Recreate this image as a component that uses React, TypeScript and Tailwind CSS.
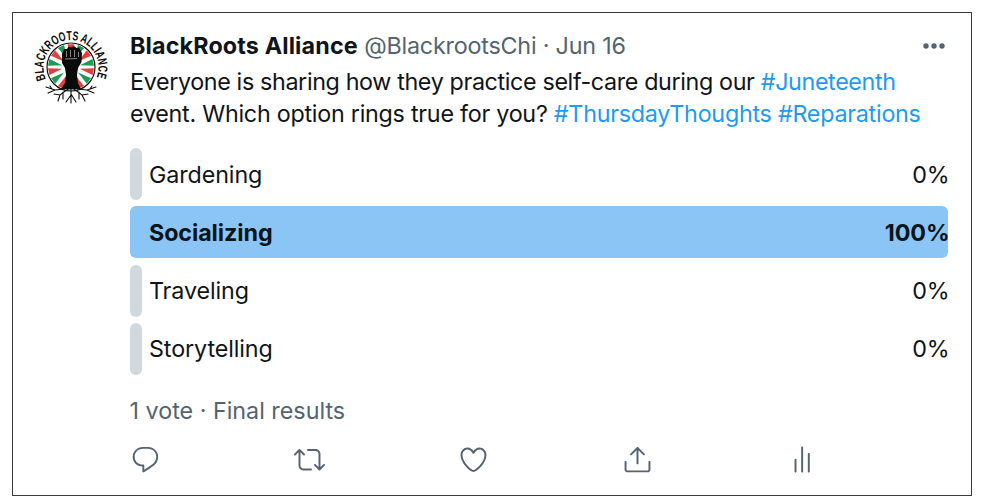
const ACTION = "#536471";

const Logo = () => {
	const cx = 38;
	const cy = 38;
	const rays = [-78, -52, -26, 0, 26, 52, 78, 102, 128, 154, 180, 206, 232, 258];
	return (
		<svg width="76" height="76" viewBox="0 0 76 76" className="overflow-visible">
			<defs>
				<path id="logoArc" d="M13 50 A27.5 27.5 0 1 1 63 50" />
			</defs>
			<circle cx={cx} cy={cy} r="24" fill="#fff" stroke="#111" strokeWidth="1.2" />
			{rays.map((a, i) => {
				const r0 = 9;
				const r1 = 23;
				const rad = ((a - 90) * Math.PI) / 180;
				const w = 0.15;
				const p = (r: number, t: number) =>
					`${cx + r * Math.cos(t)} ${cy + r * Math.sin(t)}`;
				return (
					<path
						key={i}
						d={`M${p(r0, rad)} L${p(r1, rad - w)} L${p(r1, rad + w)} Z`}
						fill={i % 2 === 0 ? "#1f9a55" : "#e2403f"}
					/>
				);
			})}
			{/* fist and forearm */}
			<path
				d="M29 25 L31 20 L34 20 L35.5 17.5 L38 18.5 L41 17 L43.5 19 L46 18.5 L49 24 L48.5 33 L45 39 L44 46 L45 54 L48 60 L28 60 L32 54 L33 46 L32 39 L29 34 Z"
				fill="#0b0b0b"
			/>
			<path d="M33.5 22 L33.5 28 M37.5 21 L37.5 28 M41.5 21 L41.5 28 M45.5 23 L45.5 28 M32 30 L44 29.5" stroke="#fff" strokeWidth="0.5" fill="none" />
			{/* roots */}
			<path
				d="M38 58 L38 74 M35 60 L27 66 L21 65 M27 66 L25 72 M32 60 L22 61 L13 58 M22 61 L15 64 M41 60 L49 66 L55 65 M49 66 L52 72 M44 60 L54 61 L63 58 M54 61 L61 64 M38 66 L33 73 M38 65 L43 73 M30 63 L30 70 M46 63 L46 70 M19 60 L17 57 M57 60 L59 57"
				stroke="#0b0b0b"
				strokeWidth="1.1"
				fill="none"
				strokeLinecap="round"
			/>
			<text
				fill="#0b0b0b"
				className="font-bold"
				style={{ fontFamily: '"Liberation Sans", sans-serif', fontSize: 13 }}
			>
				<textPath href="#logoArc" textLength="108" lengthAdjust="spacingAndGlyphs">
					BLACKROOTS ALLIANCE
				</textPath>
			</text>
		</svg>
	);
};

const Action = ({ children }: { children: React.ReactNode }) => (
	<div className="w-[164px] shrink-0">
		<svg width="31" height="31" viewBox="0 0 24 24" fill={ACTION}>
			{children}
		</svg>
	</div>
);

const PollRow = ({ label, value, winner }: { label: string; value: string; winner?: boolean }) => (
	<div className="grid h-[52px] grid-cols-1 grid-rows-1">
		<div
			className={
				winner
					? "col-start-1 row-start-1 rounded-[6px] bg-[#8ac5f5]"
					: "col-start-1 row-start-1 w-[11.5px] rounded-[6px] bg-[#cfd9de]"
			}
		/>
		<div
			className={`col-start-1 row-start-1 -mr-[1.5px] flex items-center justify-between pt-[2px] pl-[19px] text-[23.3px] tracking-[-0.1px] text-[#0f1419] ${winner ? "font-bold" : ""}`}
		>
			<span>{label}</span>
			<span>{value}</span>
		</div>
	</div>
);

export default function App() {
	return (
		<div className="h-[501px] w-[985px] bg-white p-3 font-['Inter','Liberation_Sans',sans-serif]">
			<div className="flex h-[484px] w-[960px] border-[1.5px] border-[#3a3a3a] pt-[15px] pr-[23px] pl-[20px]">
				<div className="w-[97px] shrink-0 pt-[1px]">
					<Logo />
				</div>
				<div className="min-w-0 flex-1">
					<div className="flex h-[36px] items-center justify-between text-[23.3px] leading-[36px]">
						<div className="whitespace-nowrap">
							<span className="font-bold tracking-[0.15px] text-[#0f1419]">BlackRoots Alliance</span>
							<span className="tracking-[-0.2px] text-[#536471]"> @BlackrootsChi · Jun 16</span>
						</div>
						<svg width="24" height="6" viewBox="0 0 24 6" fill={ACTION} className="mr-[2px]">
							<circle cx="4" cy="3" r="2.7" />
							<circle cx="12" cy="3" r="2.7" />
							<circle cx="20" cy="3" r="2.7" />
						</svg>
					</div>
					<div className="mt-[2px] whitespace-nowrap text-[23.3px] leading-[32px] text-[#0f1419]">
						<p className="tracking-[-0.36px]">
							Everyone is sharing how they practice self-care during our <span className="text-[#1d9bf0]">#Juneteenth</span>
						</p>
						<p className="tracking-[-0.25px]">
							event. Which option rings true for you? <span className="text-[#1d9bf0]">#ThursdayThoughts #Reparations</span>
						</p>
					</div>
					<div className="mt-[18px] flex flex-col gap-[6.3px]">
						<PollRow label="Gardening" value="0%" />
						<PollRow label="Socializing" value="100%" winner />
						<PollRow label="Traveling" value="0%" />
						<PollRow label="Storytelling" value="0%" />
					</div>
					<div className="mt-[20px] -ml-[0.5px] text-[23.3px] leading-[32px] text-[#536471]">1 vote · Final results</div>
					<div className="mt-[17px] flex">
						<Action>
							<path d="M14.046 2.242l-4.148-.01h-.002c-4.374 0-7.8 3.427-7.8 7.802 0 4.098 3.186 7.206 7.465 7.37v3.828c0 .108.044.286.12.403.142.225.384.347.632.347.138 0 .277-.038.402-.118.264-.168 6.473-4.14 8.088-5.506 1.902-1.61 3.04-3.97 3.043-6.312v-.017c-.006-4.367-3.43-7.787-7.8-7.788zm3.787 12.972c-1.134.96-4.862 3.405-6.772 4.643V16.67c0-.414-.335-.75-.75-.75h-.396c-3.66 0-6.318-2.476-6.318-5.886 0-3.534 2.768-6.302 6.3-6.302l4.147.01h.002c3.532 0 6.3 2.766 6.302 6.296-.003 1.91-.942 3.844-2.514 5.176z" />
						</Action>
						<Action>
							<path d="M23.77 15.67c-.292-.293-.767-.293-1.06 0l-2.22 2.22V7.65c0-2.068-1.683-3.75-3.75-3.75h-5.85c-.414 0-.75.336-.75.75s.336.75.75.75h5.85c1.24 0 2.25 1.01 2.25 2.25v10.24l-2.22-2.22c-.293-.293-.768-.293-1.06 0s-.294.768 0 1.06l3.5 3.5c.145.147.337.22.53.22s.383-.072.53-.22l3.5-3.5c.294-.292.294-.767 0-1.06zm-10.66 3.28H7.26c-1.24 0-2.25-1.01-2.25-2.25V6.46l2.22 2.22c.148.147.34.22.532.22s.384-.073.53-.22c.293-.293.293-.768 0-1.06l-3.5-3.5c-.293-.294-.768-.294-1.06 0l-3.5 3.5c-.294.292-.294.767 0 1.06s.767.293 1.06 0l2.22-2.22V16.7c0 2.068 1.683 3.75 3.75 3.75h5.85c.414 0 .75-.336.75-.75s-.337-.75-.75-.75z" />
						</Action>
						<Action>
							<path d="M12 21.638h-.014C9.403 21.59 1.95 14.856 1.95 8.478c0-3.064 2.525-5.754 5.403-5.754 2.29 0 3.83 1.58 4.646 2.73.814-1.148 2.354-2.73 4.645-2.73 2.88 0 5.404 2.69 5.404 5.755 0 6.376-7.454 13.11-10.037 13.157H12zM7.354 4.225c-2.08 0-3.903 1.988-3.903 4.255 0 5.74 7.034 11.596 8.55 11.658 1.518-.062 8.55-5.917 8.55-11.658 0-2.267-1.823-4.255-3.903-4.255-2.528 0-3.94 2.936-3.952 2.965-.23.562-1.156.562-1.387 0-.014-.03-1.425-2.965-3.954-2.965z" />
						</Action>
						<Action>
							<path d="M17.53 7.47l-5-5c-.293-.293-.768-.293-1.06 0l-5 5c-.294.293-.294.768 0 1.06s.767.294 1.06 0l3.72-3.72V15c0 .414.336.75.75.75s.75-.336.75-.75V4.81l3.72 3.72c.146.147.338.22.53.22s.384-.072.53-.22c.293-.293.293-.767 0-1.06z" />
							<path d="M19.708 21.944H4.292C3.028 21.944 2 20.916 2 19.652V14c0-.414.336-.75.75-.75s.75.336.75.75v5.652c0 .437.355.792.792.792h15.416c.437 0 .792-.355.792-.792V14c0-.414.336-.75.75-.75s.75.336.75.75v5.652c0 1.264-1.028 2.292-2.292 2.292z" />
						</Action>
						<Action>
							<path d="M12.5 22c-.414 0-.75-.336-.75-.75V2.75c0-.414.336-.75.75-.75s.75.336.75.75v18.5c0 .414-.336.75-.75.75zM17.64 22c-.415 0-.75-.336-.75-.75V7.78c0-.414.335-.75.75-.75.413 0 .75.336.75.75v13.47c0 .414-.337.75-.75.75zM7.36 22c-.413 0-.75-.336-.75-.75V12.2c0-.414.337-.75.75-.75s.75.336.75.75v9.05c0 .414-.337.75-.75.75z" />
						</Action>
					</div>
				</div>
			</div>
		</div>
	);
}
